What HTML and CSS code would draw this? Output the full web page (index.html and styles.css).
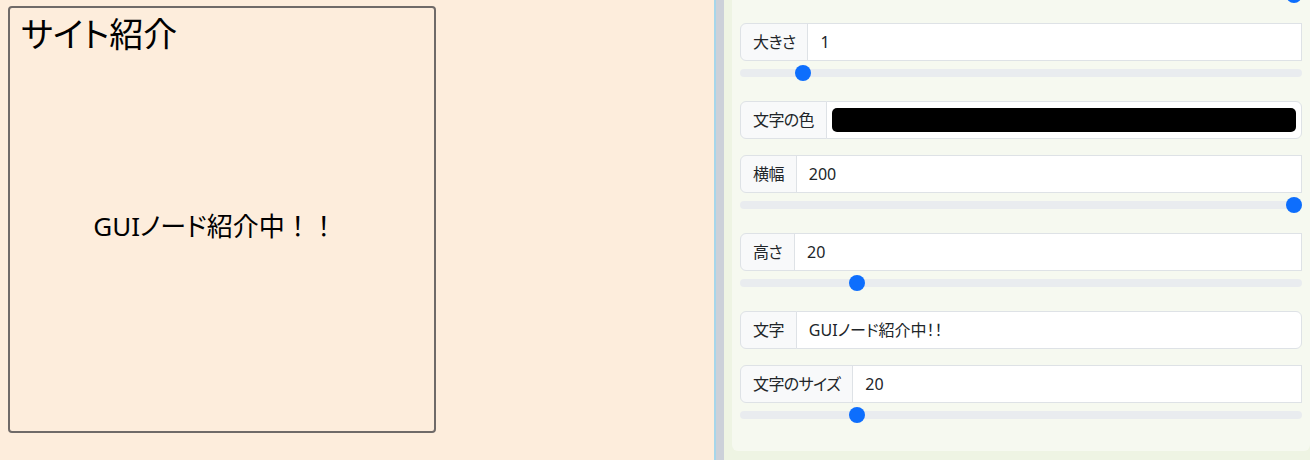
FILE: index.html
```html
<!DOCTYPE html>
<html lang="ja">
<head>
<meta charset="utf-8">
<title>GUI Node</title>
<link rel="stylesheet" href="styles.css">
</head>
<body>
<div class="app">
  <div class="stage">
    <div class="node">
      <div class="node-title">サイト紹介</div>
      <div class="node-body"><span class="node-text">GUIノード紹介中<span class="full">！！</span></span></div>
    </div>
  </div>
  <div class="splitter"></div>
  <div class="sidebar">
    <div class="panel">
      <div class="field field-clipped">
        <input type="range" class="range" min="0" max="100" value="100">
      </div>
      <div class="field">
        <div class="group"><span class="group-label">大きさ</span><input class="group-input" type="text" value="1"></div>
        <input type="range" class="range" min="0" max="10" step="0.1" value="1">
      </div>
      <div class="field">
        <div class="group"><span class="group-label">文字の色</span><input class="group-input group-color rounded" type="color" value="#000000"></div>
      </div>
      <div class="field">
        <div class="group"><span class="group-label">横幅</span><input class="group-input" type="text" value="200"></div>
        <input type="range" class="range" min="0" max="200" value="200">
      </div>
      <div class="field">
        <div class="group"><span class="group-label">高さ</span><input class="group-input" type="text" value="20"></div>
        <input type="range" class="range" min="0" max="100" value="20">
      </div>
      <div class="field">
        <div class="group"><span class="group-label">文字</span><input class="group-input rounded" type="text" value="GUIノード紹介中！！"></div>
      </div>
      <div class="field">
        <div class="group"><span class="group-label">文字のサイズ</span><input class="group-input" type="text" value="20"></div>
        <input type="range" class="range" min="0" max="100" value="20">
      </div>
    </div>
  </div>
</div>
</body>
</html>
```
FILE: styles.css
```css
* { box-sizing: border-box; }
html, body { margin: 0; padding: 0; height: 100%; }
body {
  font-family: "Noto Sans", "Noto Sans CJK JP", sans-serif;
  font-feature-settings: "palt";
  color: #212529;
  overflow: hidden;
}
.app {
  display: flex;
  height: 460px;
}
.stage {
  width: 714px;
  flex: none;
  background: #fdeddc;
  padding: 6px 0 0 8px;
}
.node {
  width: 428px;
  height: 427px;
  border: 2px solid #6f6a68;
  border-radius: 4px;
  display: flex;
  flex-direction: column;
  color: #000;
}
.node-title {
  font-size: 34px;
  line-height: 40px;
  padding: 6px 0 0 11px;
}
.node-body {
  flex: 1;
  display: flex;
  align-items: center;
  justify-content: center;
  padding: 0 14px 34px 0;
}
.node-text {
  font-size: 26px;
  line-height: 32px;
  white-space: nowrap;
}
.full { font-feature-settings: normal; }
.splitter {
  width: 10px;
  flex: none;
  border-left: 2px solid #a6d6ea;
  background: #ccd1d9;
}
.sidebar {
  flex: 1;
  background: #eef4e3;
  padding-left: 8px;
  overflow: hidden;
}
.panel {
  background: #f6f9f0;
  padding: 0 8px 8px;
  border-radius: 0 0 6px 6px;
}
.field { margin-bottom: 16px; }
.field-clipped { margin-top: -17px; }
.group {
  display: flex;
  height: 38px;
}
.group-label {
  display: flex;
  align-items: center;
  padding: 6px 12px;
  font-size: 16px;
  line-height: 24px;
  letter-spacing: -0.6px;
  background: #f8f9fa;
  border: 1px solid #dee2e6;
  border-radius: 6px 0 0 6px;
  white-space: nowrap;
}
.group-input {
  flex: 1;
  min-width: 0;
  margin: 0 0 0 -1px;
  padding: 6px 12px;
  font: inherit;
  font-size: 16px;
  line-height: 24px;
  color: #212529;
  background: #fff;
  border: 1px solid #dee2e6;
  border-radius: 0;
  outline: none;
}
.group-input.rounded { border-radius: 0 6px 6px 0; }
.group-color {
  -webkit-appearance: none;
  appearance: none;
  height: 38px;
  padding: 6px 5px;
  cursor: pointer;
}
.group-color::-webkit-color-swatch-wrapper { padding: 0; }
.group-color::-webkit-color-swatch { border: none; border-radius: 5px; }
.range {
  -webkit-appearance: none;
  appearance: none;
  display: block;
  width: 100%;
  height: 24px;
  margin: 0;
  padding: 0;
  background: transparent;
}
.range::-webkit-slider-runnable-track {
  height: 8px;
  background: #e9ecef;
  border-radius: 4px;
}
.range::-webkit-slider-thumb {
  -webkit-appearance: none;
  appearance: none;
  width: 16px;
  height: 16px;
  margin-top: -4px;
  border: 0;
  border-radius: 50%;
  background: #0d6efd;
}
```
